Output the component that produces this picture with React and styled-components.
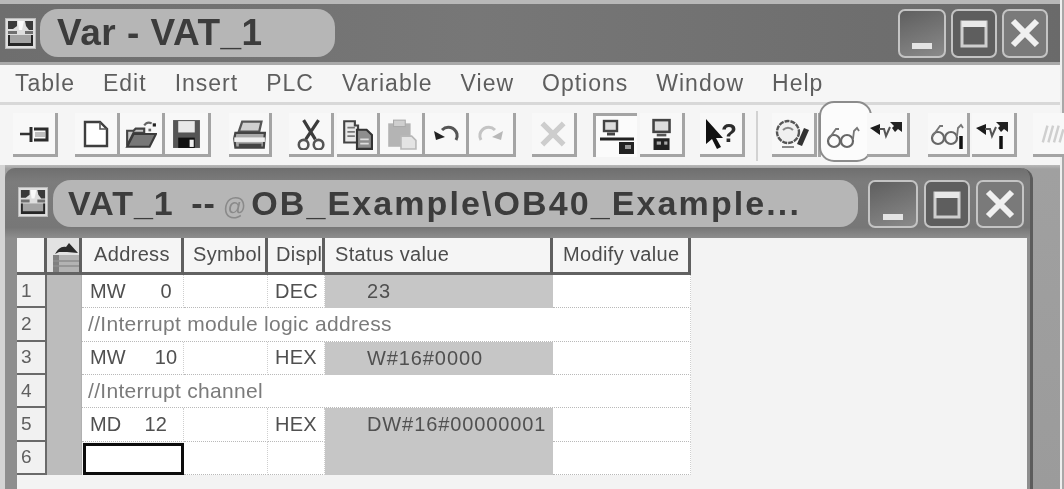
import React from 'react'
import styled, { createGlobalStyle } from 'styled-components'

const GlobalStyle = createGlobalStyle`
  html, body {
    margin: 0;
    padding: 0;
    background: #a8a8a8;
  }
  body {
    font-family: "Liberation Sans", Arial, sans-serif;
    overflow: hidden;
  }
`

const Page = styled.div`
  width: 1064px;
  height: 489px;
  overflow: hidden;
  background: #a8a8a8;
  filter: blur(0.7px);
`

const MainWindow = styled.div`
  width: 1060px;
  height: 489px;
  border-right: 2px solid #eeeeee;
  display: flex;
  flex-direction: column;
  background: #f4f4f4;
`

const MainTitleBar = styled.div`
  height: 58px;
  border-top: 4px solid #b8b8b8;
  border-bottom: 3px solid #a9a9a9;
  background: linear-gradient(90deg, #6e6e6e, #777 45%, #6a6a6a);
  display: flex;
  align-items: center;
  padding: 0 12px 0 5px;
  flex: none;
`

const TitlePill = styled.div`
  width: ${p => p.$width}px;
  height: ${p => p.$height}px;
  margin-left: ${p => p.$gap}px;
  flex: none;
  border-radius: 18px;
  background: #b6b6b6;
  color: #3c3c3c;
  font-size: ${p => p.$size}px;
  font-weight: 700;
  letter-spacing: ${p => p.$spacing}px;
  line-height: ${p => p.$height}px;
  padding-left: ${p => p.$pad}px;
  box-sizing: border-box;
  white-space: nowrap;
  overflow: hidden;
`

const TitleLead = styled.span`
  letter-spacing: 1px;
  word-spacing: 7px;
`

const AtSign = styled.span`
  font-size: 23px;
  font-weight: 400;
  color: #8a8a8a;
  letter-spacing: 0;
  margin: 0 5px 0 7px;
`

const CaptionButtons = styled.div`
  margin-left: auto;
  display: flex;
  gap: ${p => p.$gap}px;
`

const CaptionButton = styled.div`
  width: ${p => p.$width}px;
  height: ${p => p.$height}px;
  box-sizing: border-box;
  border: 2px solid #c4c4c4;
  border-radius: 7px;
  background: ${p => p.$bg};
  display: flex;
  align-items: center;
  justify-content: center;
`

const MenuBar = styled.nav`
  height: 37px;
  flex: none;
  display: flex;
  align-items: center;
  gap: 28px;
  padding-left: 15px;
  background: #f6f6f6;
  color: #5e5e5e;
  font-size: 23px;
  letter-spacing: 1px;
  border-bottom: 3px solid #d8d8d8;
`

const Toolbar = styled.div`
  height: 52px;
  flex: none;
  display: flex;
  align-items: flex-start;
  padding: 8px 0 0 13px;
  background: #f5f5f5;
`

const ToolGroup = styled.div`
  display: flex;
  flex: none;
  margin-right: ${p => p.$after}px;
`

const ToolButton = styled.div`
  width: ${p => p.$width || 45}px;
  height: 44px;
  margin-right: ${p => p.$after || 0}px;
  box-sizing: border-box;
  flex: none;
  position: relative;
  display: flex;
  align-items: center;
  justify-content: center;
  background: ${p => (p.$pressed ? '#fbfbfb' : '#f8f8f8')};
  border-style: solid;
  border-color: #a4a4a4;
  border-width: ${p => (p.$pressed ? '3px 0 0 3px' : '0 3px 3px 0')};
  svg {
    position: relative;
    z-index: 1;
  }
`

const ToolSeparator = styled.div`
  width: 2px;
  height: 50px;
  margin: -2px 14px 0 11px;
  background: #d2d2d2;
  flex: none;
`

const Highlight = styled.div`
  position: absolute;
  left: -2px;
  top: -15px;
  width: 53px;
  height: 61px;
  box-sizing: border-box;
  border: 2px solid #8c8c8c;
  border-radius: 15px;
  background: #fcfcfc;
`

const Workspace = styled.div`
  flex: 1;
  min-height: 0;
  background: linear-gradient(180deg, #b9b9b9 0, #a0a0a0 4px, #9b9b9b 100%);
  padding: 3px 27px 0 5px;
  box-shadow: inset 5px 0 0 #d4d4d4;
`

const ChildWindow = styled.div`
  height: 340px;
  border-radius: 10px 12px 0 0;
  background: #8e8e8e;
  border-right: 3px solid #5c5c5c;
  padding: 0 3px 0 12px;
  display: flex;
  flex-direction: column;
`

const ChildTitleBar = styled.div`
  height: 70px;
  flex: none;
  margin: 0 -3px 0 -12px;
  padding: 12px 6px 11px 13px;
  box-sizing: border-box;
  border-radius: 10px 10px 0 0;
  background: linear-gradient(180deg, #6f6f6f, #7c7c7c 20%, #777 85%, #8d8d8d);
  display: flex;
  align-items: flex-start;
`

const ChildIcon = styled.div`
  margin-top: 7px;
  flex: none;
  display: flex;
`

const Client = styled.div`
  flex: 1;
  background: #f3f3f3;
  color: #505050;
  font-size: 20px;
`

const Grid = styled.div`
  display: grid;
  grid-template-columns: 30px 35px 102px 84px 57px 228px 138px;
  grid-template-rows: 37px repeat(6, 33.34px);
  width: 674px;
`

const HeaderCell = styled.div`
  box-sizing: border-box;
  background: #f5f5f5;
  border-bottom: 3px solid #626262;
  border-right: 3px solid #5f5f5f;
  display: flex;
  align-items: center;
  padding-left: ${p => p.$pad || 0}px;
  letter-spacing: 0.35px;
  white-space: nowrap;
  overflow: hidden;
  color: #4c4c4c;
  padding-bottom: 2px;
`

const MarkerHeader = styled(HeaderCell)`
  background: #e2e2e2;
  padding: 0;
  align-items: flex-end;
`

const RowNumber = styled.div`
  box-sizing: border-box;
  background: #f1f1f1;
  border-bottom: 2px solid #6a6a6a;
  border-right: 2px solid #6a6a6a;
  padding-left: 4px;
  display: flex;
  align-items: center;
  font-size: 19px;
  color: #606060;
`

const MarkerCell = styled.div`
  background: #bcbcbc;
  border-right: 1px solid #b0b0b0;
`

const Cell = styled.div`
  box-sizing: border-box;
  background: ${p => (p.$status ? '#c6c6c6' : '#ffffff')};
  border-bottom: ${p => (p.$status ? '0' : '1px dotted #b9b9b9')};
  border-right: ${p => (p.$status ? '0' : '1px dotted #cfcfcf')};
  padding-left: ${p => p.$pad || 0}px;
  letter-spacing: ${p => (p.$status ? '0.9px' : '0.2px')};
  display: flex;
  align-items: center;
  white-space: pre;
  overflow: hidden;
`

const CommentCell = styled(Cell)`
  grid-column: 3 / span 5;
  color: #7b7b7b;
  font-size: 21px;
  letter-spacing: 0.3px;
  padding-left: 6px;
`

const ActiveCell = styled.div`
  box-sizing: border-box;
  background: #fff;
  border: 3px solid #0c0c0c;
  margin: 1px 0 0 1px;
`

/* icons */
const Svg = ({ children, size = 30 }) => (
  <svg width={size} height={size} viewBox="0 0 30 30" fill="none">
    {children}
  </svg>
)

const AppIcon = ({ size = 31 }) => (
  <svg width={size} height={size} viewBox="0 0 31 31">
    <rect width="31" height="31" fill="#b9b9b9" />
    <rect x="1" y="1" width="29" height="29" fill="#dedede" />
    <path d="M3 3h9v5l-4 3H3zM20 3h8v9h-4l-3-4z" fill="#3a3a3a" />
    <path d="M13 3h6l-2 9h-3z" fill="#fafafa" />
    <path d="M3 13h9v3H3zM20 13h8v3h-8z" fill="#6f6f6f" />
    <rect x="3" y="17" width="25" height="11" fill="#a3a3a3" />
    <path d="M3 17v11h25V17h-2v8H5v-8z" fill="#262626" />
  </svg>
)

const PinIcon = () => (
  <Svg>
    <path d="M1 15h11" stroke="#333" strokeWidth="2.5" />
    <path d="M12 8v15M15 10h13v11H15" stroke="#2c2c2c" strokeWidth="3" />
    <path d="M16 13h10v5H16z" fill="#bdbdbd" />
  </Svg>
)

const NewIcon = () => (
  <Svg>
    <path d="M4 3h15l7 7v17H4z" fill="#fff" stroke="#3e3e3e" strokeWidth="2.4" />
    <path d="M19 3v7h7" stroke="#555" strokeWidth="1.6" />
  </Svg>
)

const OpenIcon = () => (
  <Svg size={32}>
    <path d="M2 12h6l2-2h8v4H8L2 26z" fill="#c8c8c8" stroke="#444" strokeWidth="2" />
    <path d="M8 15h21l-6 12H2z" fill="#777" stroke="#3a3a3a" strokeWidth="2" />
    <path d="M18 7c2-3 5-3 7-2" stroke="#666" strokeWidth="2" />
    <rect x="26" y="5" width="3" height="3" fill="#222" />
    <rect x="22" y="10" width="2.5" height="2.5" fill="#666" />
  </Svg>
)

const SaveIcon = () => (
  <Svg size={31}>
    <path d="M2 2h26v27H2z" fill="#555" />
    <rect x="7" y="3" width="16" height="11" fill="#e8e8e8" />
    <rect x="7" y="19" width="16" height="10" fill="#111" />
    <rect x="18" y="21" width="4" height="7" fill="#eee" />
  </Svg>
)

const PrintIcon = () => (
  <Svg size={34}>
    <path d="M9 4h17l-2 9H6z" fill="#cfcfcf" stroke="#555" strokeWidth="2" />
    <path d="M3 14h26l-1 13H3l-1-8z" fill="#a9a9a9" stroke="#444" strokeWidth="2" />
    <rect x="2" y="18" width="27" height="4" fill="#efefef" />
    <path d="M6 25h20" stroke="#444" strokeWidth="3" />
  </Svg>
)

const CutIcon = () => (
  <Svg size={32}>
    <path d="M9 2l11 18M23 2L11 20" stroke="#3b3b3b" strokeWidth="3" />
    <circle cx="9" cy="25" r="4.5" stroke="#555" strokeWidth="2.4" />
    <circle cx="23" cy="25" r="4.5" stroke="#555" strokeWidth="2.4" />
  </Svg>
)

const CopyIcon = () => (
  <Svg size={32}>
    <path d="M3 3h10v4h3v16H3z" fill="#e8e8e8" stroke="#444" strokeWidth="2" />
    <path d="M6 9h7M6 13h7M6 17h7" stroke="#777" strokeWidth="1.5" />
    <path d="M15 11h9l5 5v13H15z" fill="#8e8e8e" stroke="#333" strokeWidth="2" />
    <path d="M18 20h8M18 24h8" stroke="#ddd" strokeWidth="1.5" />
  </Svg>
)

const PasteIcon = () => (
  <Svg size={32}>
    <path d="M3 5h21v22H3z" fill="#b4b4b4" />
    <rect x="8" y="2" width="11" height="6" fill="#cfcfcf" stroke="#aaa" />
    <path d="M15 17h10l4 4v8H15z" fill="#e4e4e4" stroke="#b8b8b8" strokeWidth="1.5" />
  </Svg>
)

const UndoIcon = () => (
  <Svg size={30}>
    <path d="M11 11c5-5 13-3 15 4 .5 2 0 4-1 6" stroke="#555" strokeWidth="3" />
    <path d="M3 12l2 9 9-3z" fill="#222" />
  </Svg>
)

const RedoIcon = () => (
  <Svg size={30}>
    <path d="M19 11c-5-5-13-3-15 4-.5 2 0 4 1 6" stroke="#c4c4c4" strokeWidth="3" />
    <path d="M27 12l-2 9-9-3z" fill="#b8b8b8" />
  </Svg>
)

const DeleteIcon = () => (
  <Svg size={32}>
    <path d="M5 5l20 20M25 5L5 25" stroke="#cdcdcd" strokeWidth="5" />
  </Svg>
)

const NetIcon = () => (
  <svg width="36" height="36" viewBox="0 0 36 36" fill="none">
    <rect x="5" y="2" width="13" height="10" fill="#ddd" stroke="#444" strokeWidth="2.4" />
    <path d="M8 15h8" stroke="#444" strokeWidth="3" />
    <path d="M1 20h34" stroke="#222" strokeWidth="3" />
    <rect x="20" y="23" width="15" height="12" fill="#222" />
    <rect x="26" y="26" width="6" height="4" fill="#999" />
  </svg>
)

const StationIcon = () => (
  <Svg size={32}>
    <rect x="8" y="2" width="15" height="11" fill="#ddd" stroke="#444" strokeWidth="2.4" />
    <path d="M11 16h9" stroke="#555" strokeWidth="2.5" />
    <rect x="8" y="19" width="15" height="11" fill="#222" />
    <rect x="11" y="22" width="4" height="3" fill="#aaa" />
    <rect x="18" y="22" width="3" height="3" fill="#aaa" />
  </Svg>
)

const HelpGlyph = styled.text`
  font-family: "Liberation Sans", Arial, sans-serif;
  font-size: 26px;
  font-weight: 700;
  fill: #2c2c2c;
`

const HelpIcon = () => (
  <svg width="40" height="34" viewBox="0 0 40 34" fill="none">
    <path d="M5 2v25l6-5 5 10 4-2-5-9h7z" fill="#111" />
    <HelpGlyph x="20" y="25">?</HelpGlyph>
  </svg>
)

const MonitorIcon = () => (
  <svg width="36" height="32" viewBox="0 0 36 32" fill="none">
    <circle cx="13" cy="14" r="11" fill="#f0f0f0" stroke="#555" strokeWidth="2.4" strokeDasharray="5 1" />
    <path d="M8 12c3-3 7-3 10 0" stroke="#888" strokeWidth="2" />
    <path d="M7 29h12" stroke="#888" strokeWidth="2" />
    <path d="M22 26l7-16 5 2-7 16z" fill="#333" />
  </svg>
)

const Glasses = ({ bar }) => (
  <svg width="36" height="32" viewBox="0 0 36 32" fill="none">
    <circle cx="8" cy="20" r="6" stroke="#666" strokeWidth="2.2" />
    <circle cx="21" cy="20" r="6" stroke="#666" strokeWidth="2.2" />
    <path d="M2 19L10 8h3M27 18l1-8 3-3 2 3" stroke="#777" strokeWidth="1.8" />
    {bar && <path d="M31 18v13" stroke="#111" strokeWidth="3.5" />}
  </svg>
)

const ModifyIcon = ({ bar }) => (
  <svg width="36" height="32" viewBox="0 0 36 32" fill="none">
    <path d="M1 10l10-4v11z" fill="#1c1c1c" />
    <path d="M10 11h5l2 7 4-9" stroke="#555" strokeWidth="2" />
    <path d="M21 4h12v10l-4-3-3 3-3-4 2-2z" fill="#222" />
    {bar && <path d="M26 18v13" stroke="#111" strokeWidth="3.5" />}
  </svg>
)

const FadedIcon = () => (
  <Svg size={28}>
    <path d="M3 24l5-18M9 24l5-18M15 24l5-18M21 24l4-14" stroke="#cfcfcf" strokeWidth="2.6" />
  </Svg>
)

const TableMark = () => (
  <svg width="32" height="32" viewBox="0 0 32 32" fill="none">
    <path d="M8 14c3-5 6-8 11-7l3-4 9 10-11-1H12z" fill="#2a2a2a" />
    <rect x="6" y="15" width="26" height="17" fill="#b3b3b3" />
    <rect x="6" y="15" width="6" height="17" fill="#808080" />
    <path d="M6 21h26M6 26h26" stroke="#8d8d8d" strokeWidth="1.5" />
  </svg>
)

const MinGlyph = ({ width = 22 }) => (
  <svg width={width} height="40" viewBox="0 0 22 40">
    <rect x="1" y="30" width="20" height="6" fill="#e4e4e4" />
  </svg>
)

const MaxGlyph = () => (
  <svg width="28" height="30" viewBox="0 0 28 30" fill="none">
    <rect x="2" y="4" width="24" height="24" stroke="#cfcfcf" strokeWidth="3" />
    <rect x="2" y="3" width="24" height="6" fill="#e8e8e8" />
  </svg>
)

const CloseGlyph = () => (
  <svg width="32" height="32" viewBox="0 0 32 32">
    <path d="M4 4l24 24M28 4L4 28" stroke="#f0f0f0" strokeWidth="6" />
  </svg>
)

const MENU = ['Table', 'Edit', 'Insert', 'PLC', 'Variable', 'View', 'Options', 'Window', 'Help']

const ROWS = [
  { address: 'MW      0', disp: 'DEC', status: '23' },
  { comment: '//Interrupt module logic address' },
  { address: 'MW     10', disp: 'HEX', status: 'W#16#0000' },
  { comment: '//Interrupt channel' },
  { address: 'MD    12', disp: 'HEX', status: 'DW#16#00000001' },
  { active: true },
]

const Caption = ({ sizes, gap, large }) => (
  <CaptionButtons $gap={gap}>
    <CaptionButton $width={sizes[0]} $height={large ? 49 : 48} $bg="linear-gradient(160deg, #5f5f5f, #8a8a8a)">
      <MinGlyph />
    </CaptionButton>
    <CaptionButton $width={sizes[1]} $height={large ? 49 : 48} $bg="#5e5e5e">
      <MaxGlyph />
    </CaptionButton>
    <CaptionButton $width={sizes[2]} $height={large ? 49 : 48} $bg="#7a7a7a">
      <CloseGlyph />
    </CaptionButton>
  </CaptionButtons>
)

export default function App() {
  return (
    <Page>
      <GlobalStyle />
      <MainWindow>
        <MainTitleBar>
          <AppIcon />
          <TitlePill $width={295} $height={48} $gap={4} $size={37} $spacing={0.5} $pad={17}>
            Var - VAT_1
          </TitlePill>
          <Caption sizes={[48, 46, 46]} gap={5} large />
        </MainTitleBar>

        <MenuBar>
          {MENU.map(item => (
            <span key={item}>{item}</span>
          ))}
        </MenuBar>

        <Toolbar>
          <ToolGroup $after={17}>
            <ToolButton><PinIcon /></ToolButton>
          </ToolGroup>
          <ToolGroup $after={18}>
            <ToolButton><NewIcon /></ToolButton>
            <ToolButton><OpenIcon /></ToolButton>
            <ToolButton $width={46}><SaveIcon /></ToolButton>
          </ToolGroup>
          <ToolGroup $after={17}>
            <ToolButton $width={43}><PrintIcon /></ToolButton>
          </ToolGroup>
          <ToolGroup $after={16}>
            <ToolButton $after={3}><CutIcon /></ToolButton>
            <ToolButton $width={43}><CopyIcon /></ToolButton>
            <ToolButton><PasteIcon /></ToolButton>
            <ToolButton $width={44}><UndoIcon /></ToolButton>
            <ToolButton $width={47}><RedoIcon /></ToolButton>
          </ToolGroup>
          <ToolGroup $after={16}>
            <ToolButton><DeleteIcon /></ToolButton>
          </ToolGroup>
          <ToolGroup $after={15}>
            <ToolButton $width={44} $after={3} $pressed><NetIcon /></ToolButton>
            <ToolButton><StationIcon /></ToolButton>
          </ToolGroup>
          <ToolGroup $after={0}>
            <ToolButton><HelpIcon /></ToolButton>
          </ToolGroup>
          <ToolSeparator />
          <ToolGroup $after={18}>
            <ToolButton $after={1}><MonitorIcon /></ToolButton>
            <ToolButton $width={49} $pressed>
              <Highlight />
              <Glasses />
            </ToolButton>
            <ToolButton $width={43}><ModifyIcon /></ToolButton>
          </ToolGroup>
          <ToolGroup $after={16}>
            <ToolButton $width={42} $after={2}><Glasses bar /></ToolButton>
            <ToolButton><ModifyIcon bar /></ToolButton>
          </ToolGroup>
          <ToolGroup $after={0}>
            <ToolButton><FadedIcon /></ToolButton>
          </ToolGroup>
        </Toolbar>

        <Workspace>
          <ChildWindow>
            <ChildTitleBar>
              <ChildIcon><AppIcon size={30} /></ChildIcon>
              <TitlePill $width={805} $height={47} $gap={5} $size={34} $spacing={2.1} $pad={15}>
                <TitleLead>VAT_1 --</TitleLead>
                <AtSign>@</AtSign>OB_Example\OB40_Example...
              </TitlePill>
              <Caption sizes={[50, 46, 48]} gap={6} />
            </ChildTitleBar>
            <Client>
              <Grid>
                <HeaderCell />
                <MarkerHeader><TableMark /></MarkerHeader>
                <HeaderCell $pad={12}>Address</HeaderCell>
                <HeaderCell $pad={9}>Symbol</HeaderCell>
                <HeaderCell $pad={8}>Displ</HeaderCell>
                <HeaderCell $pad={10}>Status value</HeaderCell>
                <HeaderCell $pad={10}>Modify value</HeaderCell>
                {ROWS.map((row, i) => (
                  <React.Fragment key={i}>
                    <RowNumber>{i + 1}</RowNumber>
                    <MarkerCell />
                    {row.comment ? (
                      <CommentCell>{row.comment}</CommentCell>
                    ) : (
                      <>
                        {row.active ? <ActiveCell /> : <Cell $pad={8}>{row.address}</Cell>}
                        <Cell />
                        <Cell $pad={7}>{row.disp}</Cell>
                        <Cell $status $pad={42}>{row.status}</Cell>
                        <Cell />
                      </>
                    )}
                  </React.Fragment>
                ))}
              </Grid>
            </Client>
          </ChildWindow>
        </Workspace>
      </MainWindow>
    </Page>
  )
}
